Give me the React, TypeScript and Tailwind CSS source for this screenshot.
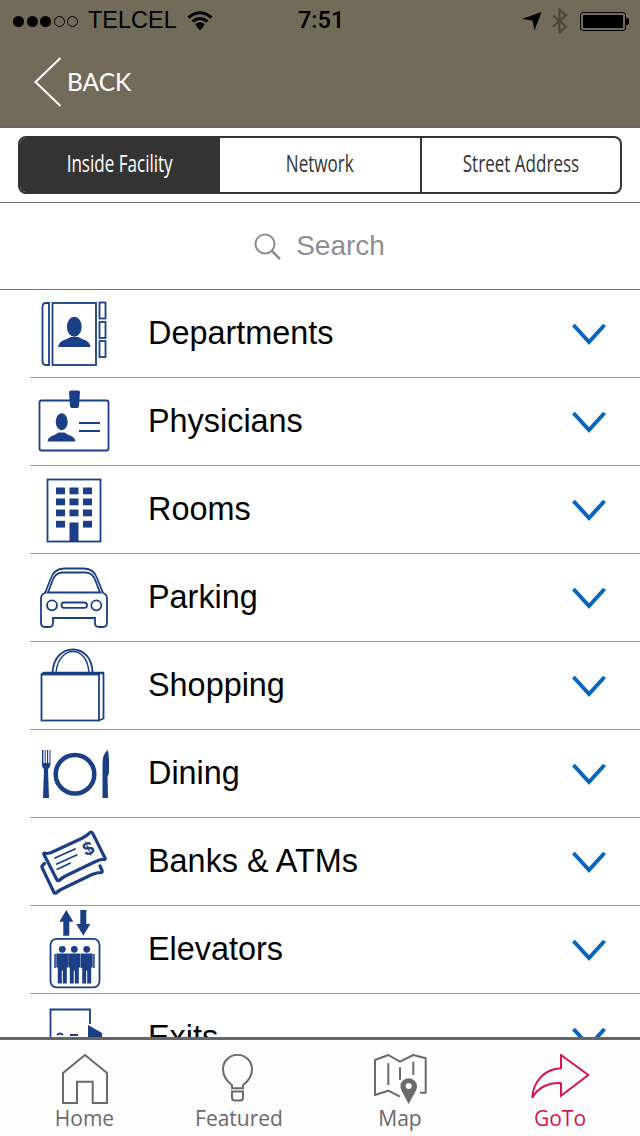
import React from 'react';

const navy = '#1b3f86';

function Departments() {
  return (
    <svg width="100" height="88" viewBox="0 0 100 88" fill="none" stroke={navy} strokeWidth="1.8">
      <rect x="22.5" y="13" width="43.5" height="62" />
      <path d="M19 13h-3q-3.5 0-3.5 4v54q0 4 3.5 4h3z" />
      <rect x="69.5" y="12.5" width="6" height="16" />
      <rect x="69.5" y="32" width="6" height="16" />
      <rect x="69.5" y="51" width="6" height="16" />
      <ellipse cx="44.3" cy="36.7" rx="7.4" ry="10" fill={navy} stroke="none" />
      <path d="M28 57q1-6 9-8l3.5-2h8l3.5 2q8 2 8.500 8z" fill={navy} stroke="none" />
    </svg>
  );
}

function Physicians() {
  return (
    <svg width="100" height="88" viewBox="0 0 100 88" fill="none" stroke={navy} strokeWidth="1.8">
      <rect x="9.500" y="22.500" width="69" height="50" rx="2" />
      <path d="M39 14q0-1.500 2-1.500h7q2 0 2 1.500l-1 14q0 2-2 2h-5q-2 0-2-2z" fill={navy} stroke="none" />
      <ellipse cx="31.700" cy="43.700" rx="6" ry="8.500" fill={navy} stroke="none" />
      <path d="M17.500 63.500q.5-5 7-6.500l4-2.500h6l4 2.500q6.500 1.500 7 6.500z" fill={navy} stroke="none" />
      <path d="M49 45h21M49 53h21" />
    </svg>
  );
}

function Rooms() {
  const xs = [26, 39.5, 53];
  const ys = [21.5, 32.5, 43.5];
  return (
    <svg width="100" height="88" viewBox="0 0 100 88" fill="none">
      <rect x="17.500" y="13.500" width="53" height="62" stroke={navy} strokeWidth="1.800" />
      {ys.map((y) => xs.map((x) => <rect key={`${x}-${y}`} x={x} y={y} width="9" height="6.800" fill={navy} />))}
      <rect x="26" y="54.800" width="9" height="6.800" fill={navy} />
      <rect x="53" y="54.800" width="9" height="6.800" fill={navy} />
      <rect x="39.500" y="56.500" width="9" height="19" fill={navy} />
    </svg>
  );
}

function Parking() {
  return (
    <svg width="100" height="88" viewBox="0 0 100 88" fill="none" stroke={navy} strokeWidth="1.800">
      <path d="M15 39l6-15q3-9 13-9.500h20q10 .5 13 9.500l6 15q4 1 4 6v24q0 4-4 4h-4q-4 0-4-4v-5H23v5q0 4-4 4h-4q-4 0-4-4V45q0-5 4-6z" />
      <path d="M16.500 38.500h55M18 38.500l5-13q2.500-6.500 9-7h24q6.500.5 9 7l5 13" />
      <circle cx="22" cy="51.300" r="5" />
      <circle cx="66.300" cy="51.300" r="5" />
      <rect x="31.500" y="48.500" width="25.500" height="5.300" rx="2.600" />
    </svg>
  );
}

function Shopping() {
  return (
    <svg width="100" height="88" viewBox="0 0 100 88" fill="none" stroke={navy} strokeWidth="1.800">
      <rect x="11.500" y="32.500" width="57.500" height="46" />
      <path d="M69 78.500l4.500-2V31" />
      <path d="M11.500 32.500l2.500-1.500h60" strokeWidth="2.600" />
      <path d="M22.500 31C23 15 33 7.500 43 7.500s19.500 8 19.500 23.500" />
      <path d="M26 31C27 17 35 9.500 43 9.500s15 7 16 21.500" strokeWidth="1.400" />
    </svg>
  );
}

function Dining() {
  return (
    <svg width="100" height="88" viewBox="0 0 100 88" fill="none">
      <circle cx="45" cy="44.300" r="19.300" stroke={navy} strokeWidth="4.500" />
      <path d="M12 20v14q0 4 2 5l-1 29h6l-1-29q2-1 2.500-5V20h-1v13h-1.300V20H17v13h-1.300V20h-1v13h-1.300V20z" fill={navy} />
      <path d="M77.500 20q2 4 1.500 22-.5 4-1.500 4l.5 22h-5.500V34q0-10 5-14z" fill={navy} />
    </svg>
  );
}

function Banks() {
  return (
    <svg width="100" height="88" viewBox="0 0 100 88" fill="none" stroke={navy} strokeLinecap="round" strokeLinejoin="round">
      <path d="M14.500 35q3 1.500 9-1.500l28-13q6-3 9-6.500 1.500 0 2 1l12.500 25q.5 1-.5 1.500-4-.5-10 2.500l-27 13q-6 3-8.500 5.500-1.500.5-2-.5L14 36.500q-.5-1 .5-1.500z" strokeWidth="3.200" />
      <path d="M14.500 45.500l-2 2q-1 1-.5 2l12 25q.5 1 2 .5 3-3 9-5.500l27-13q5-2 9.500-2 1-.5.500-2l-2-4.500" strokeWidth="3.200" />
      <path d="M25 40l20-9M26.700 46l20-9M27.300 51.300L40 45.300" strokeWidth="1.800" />
      <text x="58" y="37" fontFamily="'Liberation Sans', sans-serif" fontWeight="700" fontSize="19" fill={navy} stroke="none" textAnchor="middle" transform="rotate(-22 58 30)">$</text>
    </svg>
  );
}

function Person({ x, side }: { x: number; side: number }) {
  return (
    <g fill={navy}>
      <circle cx={x} cy="43.300" r="3.400" />
      <path d={`M${x - 6} 47.500h12v14h-1.500v16h-4v-13h-1v13h-4v-16h-1.500z`} />
      <rect x={side < 0 ? x - 8 : x + 6.500} y="48" width="1.500" height="14" />
    </g>
  );
}

function Elevators() {
  return (
    <svg width="100" height="88" viewBox="0 0 100 88" fill="none">
      <path d="M36.300 4l7 11.700h-4v14h-6v-14h-4z" fill={navy} />
      <path d="M50.300 4h6v14h4l-7 11.700-7-11.700h4z" fill={navy} />
      <rect x="20.500" y="32.800" width="49" height="48.500" rx="6" stroke={navy} strokeWidth="1.800" />
      <Person x={32.300} side={-1} />
      <Person x={44.300} side={0} />
      <Person x={56.700} side={1} />
    </svg>
  );
}

function Exits() {
  return (
    <svg width="100" height="88" viewBox="0 0 100 88" fill="none">
      <path d="M60 30V15.500H20.500V70" stroke={navy} strokeWidth="1.800" />
      <path d="M58 31l14 8v12H58z" fill={navy} />
      <path d="M27 41q3-3 6 0M40 41h8" stroke={navy} strokeWidth="1.800" />
    </svg>
  );
}

const rows: { name: string; Icon: () => React.ReactElement }[] = [
  { name: 'Departments', Icon: Departments },
  { name: 'Physicians', Icon: Physicians },
  { name: 'Rooms', Icon: Rooms },
  { name: 'Parking', Icon: Parking },
  { name: 'Shopping', Icon: Shopping },
  { name: 'Dining', Icon: Dining },
  { name: 'Banks & ATMs', Icon: Banks },
  { name: 'Elevators', Icon: Elevators },
  { name: 'Exits', Icon: Exits },
];

function StatusBar() {
  return (
    <div className="relative flex h-[42px] items-center pl-[13px] pr-[11px] font-['Liberation_Sans',sans-serif] text-[23.500px] text-black">
      <div className="flex items-center gap-[2.500px]">
        {[0, 1, 2].map((i) => <span key={i} className="h-[11px] w-[11px] rounded-full bg-black" />)}
        {[3, 4].map((i) => <span key={i} className="h-[11px] w-[11px] rounded-full border border-black" />)}
      </div>
      <span className="ml-[10px]">TELCEL</span>
      <svg className="ml-[10px]" width="26" height="20" viewBox="0 0 26 20" fill="none" stroke="#000" strokeWidth="3">
        <path d="M1.500 6.500Q13-3 24.500 6.500M5.500 10.500q7.500-6 15 0M9 14.200q4-3 8 0" />
        <path d="M9.500 15.500L13 19.500l3.500-4q-3.500-2-7 0z" fill="#000" stroke="none" />
      </svg>
      <span className="absolute left-[298px] font-['Roboto',sans-serif] text-[23.500px] font-medium">7:51</span>
      <div className="ml-auto flex items-center">
        <svg width="20" height="20" viewBox="0 0 20 20"><path d="M19.500 1L12.500 19.500 10.500 9.500 0 8z" fill="#000" /></svg>
        <svg className="ml-[9px]" width="17" height="26" viewBox="0 0 17 26" fill="none" stroke="#4a4538" strokeWidth="2.200">
          <path d="M2 7.500l13 11L8.500 24.500V1.500L15 7.500 2 18.500" />
        </svg>
        <div className="ml-[12px] flex items-center">
          <div className="flex h-[19px] w-[46px] items-center rounded-[3px] border border-black p-[2px]">
            <div className="h-full w-full rounded-[1px] bg-black" />
          </div>
          <div className="h-[7px] w-[3px] rounded-r-[2px] bg-black" />
        </div>
      </div>
    </div>
  );
}

function Segment({ label, className }: { label: string; className: string }) {
  return (
    <div className={`flex h-full items-center justify-center pb-[4px] ${className}`}>
      <span className="inline-block scale-x-[0.71] whitespace-nowrap font-['Open_Sans',sans-serif] text-[24px]">{label}</span>
    </div>
  );
}

function Tab({ label, color, className, children }: { label: string; color: string; className?: string; children: React.ReactNode }) {
  return (
    <div className={`flex flex-col items-center ${className ?? ''}`} style={{ color }}>
      {children}
      <span className="mt-[-2px] font-['Open_Sans',sans-serif] text-[21px] leading-[28px]">{label}</span>
    </div>
  );
}

export default function App() {
  return (
    <div className="flex h-[1136px] w-[640px] flex-col overflow-hidden bg-white">
      <header className="h-[128px] border-b-2 border-[#666666] bg-[#736b5a]">
        <StatusBar />
        <div className="flex items-center pl-[34px] pt-[15px]">
          <svg width="28" height="50" viewBox="0 0 28 50" fill="none" stroke="#fff" strokeWidth="2">
            <path d="M26.500 1L1.500 25l25 24" />
          </svg>
          <span className="ml-[5px] font-['Lato',sans-serif] text-[24.500px] text-white">BACK</span>
        </div>
      </header>

      <div className="border-b border-[#777777] px-[18px] py-[8px]">
        <div className="flex h-[58px] overflow-hidden rounded-[8px] border-2 border-[#333333]">
          <Segment label="Inside Facility" className="w-[200px] bg-[#333333] text-white" />
          <Segment label="Network" className="w-[202px] border-r-2 border-[#333333] text-[#333333]" />
          <Segment label="Street Address" className="flex-1 text-[#333333]" />
        </div>
      </div>

      <div className="flex h-[87px] shrink-0 items-center justify-center gap-[15px] border-b border-[#777777] pr-[1px]">
        <svg width="27" height="27" viewBox="0 0 27 27" fill="none" stroke="#8e8e93" strokeWidth="2">
          <circle cx="11" cy="11" r="9.500" />
          <path d="M18 18l8 8" strokeWidth="2.500" />
        </svg>
        <span className="font-['Liberation_Sans',sans-serif] text-[28px] text-[#8e8e93]">Search</span>
      </div>

      <div className="min-h-0 flex-1 overflow-hidden pl-[30px]">
        {rows.map(({ name, Icon }) => (
          <div key={name} className="flex h-[88px] shrink-0 items-center border-b border-[#2ac5e6] pr-[33px]">
            <div className="w-[118px] shrink-0 self-start"><Icon /></div>
            <span className="flex-1 pb-[1px] font-['Liberation_Sans',sans-serif] text-[32.400px] text-black">{name}</span>
            <svg width="36" height="22" viewBox="0 0 36 22" fill="none" stroke="#0a66b8" strokeWidth="4">
              <path d="M2.500 2L18 19 33.500 2" />
            </svg>
          </div>
        ))}
      </div>

      <nav className="grid h-[99px] shrink-0 grid-cols-4 border-t-[3px] border-[#666666] bg-[#fdfdfd] pt-[14px]">
        <Tab label="Home" color="#6a6a6a" className="pl-[9px]">
          <svg width="60" height="52" viewBox="0 0 60 52" fill="none" stroke="#6a6a6a" strokeWidth="2">
            <path d="M8 49V19L30 1l22 18v30H37.700V27.700H22V49z" />
          </svg>
        </Tab>
        <Tab label="Featured" color="#6a6a6a" className="pr-[2px]">
          <svg width="60" height="52" viewBox="0 0 60 52" fill="none" stroke="#6a6a6a" strokeWidth="2">
            <path d="M23 34.300v-3q-9-7-9-16a14.500 14.500 0 0 1 29 0q0 9-9 16v3z" />
            <path d="M23 37.500h11v6q0 3-3 3h-5q-3 0-3-3z" />
          </svg>
        </Tab>
        <Tab label="Map" color="#6a6a6a">
          <svg width="60" height="52" viewBox="0 0 60 52" fill="none" stroke="#6a6a6a" strokeWidth="2" strokeLinejoin="round">
            <path d="M30 42.700L18.300 36.700 5 41V6L18.300 1 30 7.700 43.300 1l12.400 3.300v34.400H50" />
            <path d="M18.300 9.300V31M30 13.300V26M43.300 7.700V21" />
            <path fillRule="evenodd" d="M38.700 50l-7-13a8.300 8.300 0 1 1 14 0zM38.700 29a3 3 0 1 0 0 6 3 3 0 0 0 0-6z" fill="#6a6a6a" stroke="none" />
          </svg>
        </Tab>
        <Tab label="GoTo" color="#d4154e">
          <svg width="60" height="52" viewBox="0 0 60 52" fill="none" stroke="#d4154e" strokeWidth="2">
            <path d="M31 1l27.300 20L31 41.700V29.300C20 28 8 33 2.300 43.700 3 28 14 15 31 14.300z" />
          </svg>
        </Tab>
      </nav>
    </div>
  );
}
